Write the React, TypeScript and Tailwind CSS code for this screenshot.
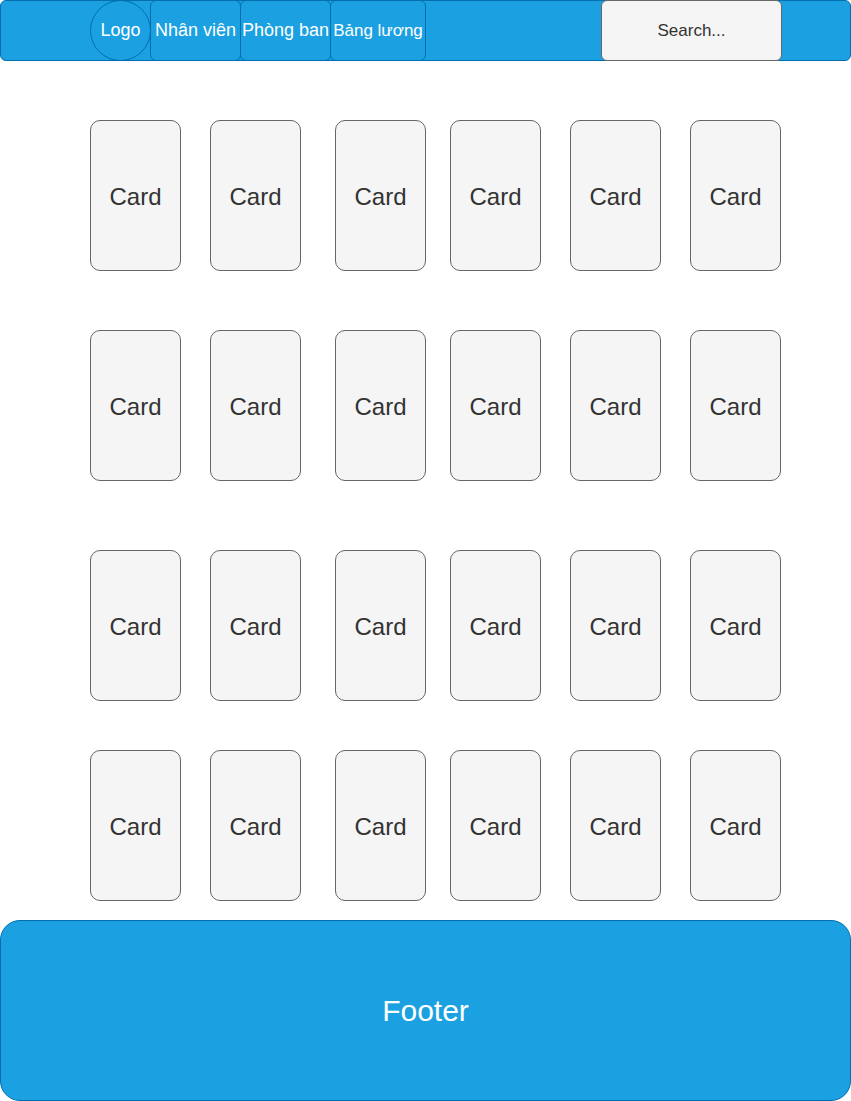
import React from "react";

const font = { fontFamily: '"Liberation Sans", Arial, sans-serif' };

function Card({ className = "" }: { className?: string }) {
  return (
    <div
      className={`w-[91px] h-[151px] shrink-0 rounded-[10px] border border-[#666666] bg-[#f5f5f5] flex items-center justify-center pt-[2px] text-[24px] text-[#333333] ${className}`}
    >
      Card
    </div>
  );
}

function CardRow({ className = "" }: { className?: string }) {
  return (
    <div className={`flex pl-[90px] ${className}`}>
      <Card />
      <Card className="ml-[29px]" />
      <Card className="ml-[34px]" />
      <Card className="ml-[24px]" />
      <Card className="ml-[29px]" />
      <Card className="ml-[29px]" />
    </div>
  );
}

export default function App() {
  return (
    <div className="w-[851px] h-[1101px] bg-white" style={font}>
      <header className="h-[61px] w-[851px] rounded-[6px] border border-[#006eaf] bg-[#1ba1e2] flex items-stretch pl-[89px] text-white">
        <div className="w-[61px] h-[61px] -mt-px rounded-full border border-[#006eaf] flex items-center justify-center text-[18px]">
          Logo
        </div>
        <div className="w-[91px] -my-px rounded-[6px] border border-[#006eaf] flex items-center justify-center text-[18px] -ml-px">
          Nhân viên
        </div>
        <div className="w-[91px] -my-px rounded-[6px] border border-[#006eaf] flex items-center justify-center text-[18px] -ml-px">
          Phòng ban
        </div>
        <div className="w-[96px] -my-px rounded-[6px] border border-[#006eaf] flex items-center justify-center text-[17px] -ml-px">
          Bảng lương
        </div>
        <div className="ml-[175px] w-[181px] -my-px rounded-[6px] border border-[#666666] bg-[#f5f5f5] flex items-center justify-center text-[17px] text-[#333333]">
          Search...
        </div>
      </header>
      <CardRow className="mt-[59px]" />
      <CardRow className="mt-[59px]" />
      <CardRow className="mt-[69px]" />
      <CardRow className="mt-[49px]" />
      <footer className="mt-[19px] h-[181px] w-[851px] rounded-[20px] border border-[#006eaf] bg-[#1ba1e2] flex items-center justify-center text-white text-[30px]">
        Footer
      </footer>
    </div>
  );
}
